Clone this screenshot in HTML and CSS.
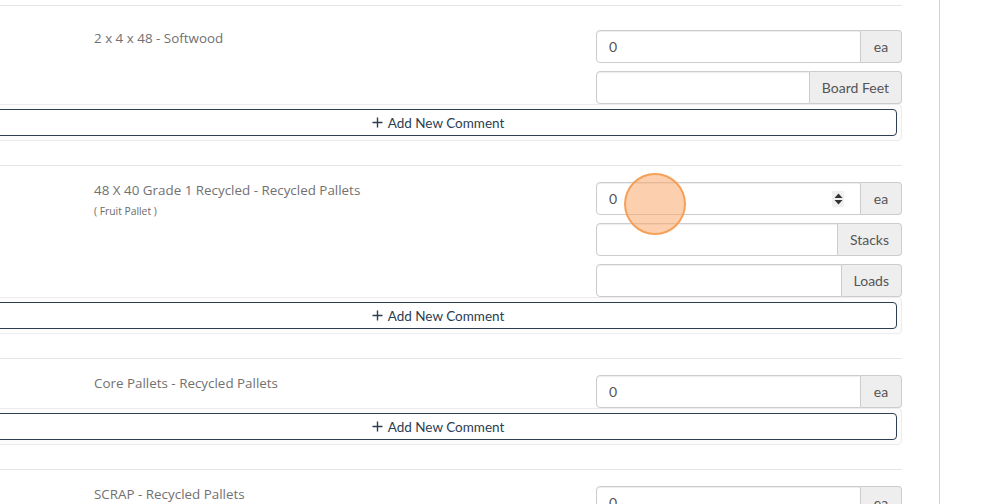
FILE: index.html
```html
<!DOCTYPE html>
<html lang="en">
<head>
    <meta charset="UTF-8">
    <meta name="viewport" content="width=device-width, initial-scale=1.0">
    <title>Order Items</title>
    <link rel="stylesheet" href="styles.css">
</head>
<body>
    <div class="page">
        <div class="main">
            <div class="items">

                <!-- 2x4 softwood -->
                <div class="item first">
                    <div class="item-row">
                        <div class="item-name">2 x 4 x 48 - Softwood</div>
                        <div class="item-qty">
                            <div class="input-group">
                                <div class="field"><input type="text" value="0"></div>
                                <span class="addon unit-ea">ea</span>
                            </div>
                            <div class="input-group">
                                <div class="field"><input type="text"></div>
                                <span class="addon">Board Feet</span>
                            </div>
                        </div>
                    </div>
                    <div class="comment-well">
                        <button class="comment-btn">
                            <svg class="plus" width="11" height="11" viewBox="0 0 11 11"><path d="M5.5 0.5v10M0.5 5.5h10" stroke="#2c3e50" stroke-width="1.4" fill="none"/></svg>
                            Add New Comment
                        </button>
                    </div>
                </div>

                <!-- 48x40 recycled -->
                <div class="item">
                    <div class="item-row">
                        <div class="item-name">
                            48 X 40 Grade 1 Recycled - Recycled Pallets
                            <div class="item-note">( Fruit Pallet )</div>
                        </div>
                        <div class="item-qty">
                            <div class="input-group">
                                <div class="field">
                                    <input type="text" value="0">
                                    <span class="spin">
                                        <svg width="9" height="12" viewBox="0 0 9 12"><path d="M4.5 0.5L8.5 5H0.5z M4.5 11.5L8.5 7H0.5z" fill="#333"/></svg>
                                    </span>
                                </div>
                                <span class="addon unit-ea">ea</span>
                            </div>
                            <div class="input-group">
                                <div class="field"><input type="text"></div>
                                <span class="addon">Stacks</span>
                            </div>
                            <div class="input-group">
                                <div class="field"><input type="text"></div>
                                <span class="addon">Loads</span>
                            </div>
                        </div>
                    </div>
                    <div class="comment-well">
                        <button class="comment-btn">
                            <svg class="plus" width="11" height="11" viewBox="0 0 11 11"><path d="M5.5 0.5v10M0.5 5.5h10" stroke="#2c3e50" stroke-width="1.4" fill="none"/></svg>
                            Add New Comment
                        </button>
                    </div>
                    <div class="click-dot"></div>
                </div>

                <!-- core pallets -->
                <div class="item">
                    <div class="item-row">
                        <div class="item-name">Core Pallets - Recycled Pallets</div>
                        <div class="item-qty">
                            <div class="input-group">
                                <div class="field"><input type="text" value="0"></div>
                                <span class="addon unit-ea">ea</span>
                            </div>
                        </div>
                    </div>
                    <div class="comment-well">
                        <button class="comment-btn">
                            <svg class="plus" width="11" height="11" viewBox="0 0 11 11"><path d="M5.5 0.5v10M0.5 5.5h10" stroke="#2c3e50" stroke-width="1.4" fill="none"/></svg>
                            Add New Comment
                        </button>
                    </div>
                </div>

                <!-- scrap -->
                <div class="item">
                    <div class="item-row">
                        <div class="item-name">SCRAP - Recycled Pallets</div>
                        <div class="item-qty">
                            <div class="input-group">
                                <div class="field"><input type="text" value="0"></div>
                                <span class="addon unit-ea">ea</span>
                            </div>
                        </div>
                    </div>
                    <div class="comment-well">
                        <button class="comment-btn">
                            <svg class="plus" width="11" height="11" viewBox="0 0 11 11"><path d="M5.5 0.5v10M0.5 5.5h10" stroke="#2c3e50" stroke-width="1.4" fill="none"/></svg>
                            Add New Comment
                        </button>
                    </div>
                </div>

            </div>
        </div>
        <div class="side"></div>
    </div>
</body>
</html>
```

FILE: styles.css
```css
body {
    margin: 0;
    padding: 0;
    background-color: #fff;
    font-family: Lato, "Liberation Sans", sans-serif;
    overflow: hidden;
}

.page {
    display: flex;
    height: 504px;
    overflow: hidden;
}

.main {
    width: 940px;
    flex-shrink: 0;
    border-right: 1px solid #d2d2d2;
    padding-top: 5px;
    padding-right: 37px;
    box-sizing: border-box;
}

.side {
    flex: 1;
}

.items {
    margin-left: -26px;
}

.item {
    position: relative;
    border-top: 1px solid #e6e6e6;
    padding-top: 16px;
    margin-bottom: 24px;
}

.item.first {
    padding-top: 24px;
}

.item-row {
    display: flex;
    justify-content: space-between;
}

.item-name {
    padding-left: 120px;
    margin-top: -1px;
    font-family: "Open Sans", "Noto Sans", sans-serif;
    font-size: 13.4px;
    line-height: 18px;
    color: #717171;
}

.item-note {
    font-size: 10.3px;
    line-height: 14px;
    margin-top: 5px;
    color: #6a6a6a;
}

.item-qty {
    width: 306px;
    display: flex;
    flex-direction: column;
    gap: 8px;
}

.input-group {
    display: flex;
    height: 33px;
}

.field {
    flex: 1;
    display: flex;
    align-items: center;
    border: 1px solid #ccc;
    border-radius: 4px 0 0 4px;
    box-shadow: inset 0 1px 1px rgba(0, 0, 0, 0.075);
    background-color: #fff;
}

.field input {
    flex: 1;
    min-width: 0;
    border: none;
    outline: none;
    background: transparent;
    padding: 0 12px;
    font-family: Lato, "Liberation Sans", sans-serif;
    font-size: 14px;
    color: #555;
}

.spin {
    display: flex;
    align-items: center;
    justify-content: center;
    width: 12px;
    height: 16px;
    margin-right: 16px;
    background-color: #f0f0f0;
}

.addon {
    display: flex;
    align-items: center;
    justify-content: center;
    padding: 0 12px;
    background-color: #eee;
    border: 1px solid #ccc;
    border-left: none;
    border-radius: 0 4px 4px 0;
    font-size: 14px;
    color: #555;
}

.addon.unit-ea {
    min-width: 41px;
    box-sizing: border-box;
}

.comment-well {
    border: 1px solid #ececec;
    border-radius: 4px;
    background-color: #fcfcfc;
    padding: 4px;
}

.comment-btn {
    display: flex;
    align-items: center;
    justify-content: center;
    gap: 5px;
    width: 100%;
    height: 27px;
    background-color: #fff;
    border: 1px solid #2c3e50;
    border-radius: 4px;
    font-family: Lato, "Liberation Sans", sans-serif;
    font-size: 13.5px;
    color: #2c3e50;
    cursor: pointer;
}

.comment-btn:focus {
    outline: none;
}

.click-dot {
    position: absolute;
    left: 650px;
    top: 7px;
    width: 58px;
    height: 58px;
    border-radius: 50%;
    background-color: rgba(250, 170, 110, 0.55);
    border: 2px solid rgba(244, 152, 72, 0.85);
}
```
